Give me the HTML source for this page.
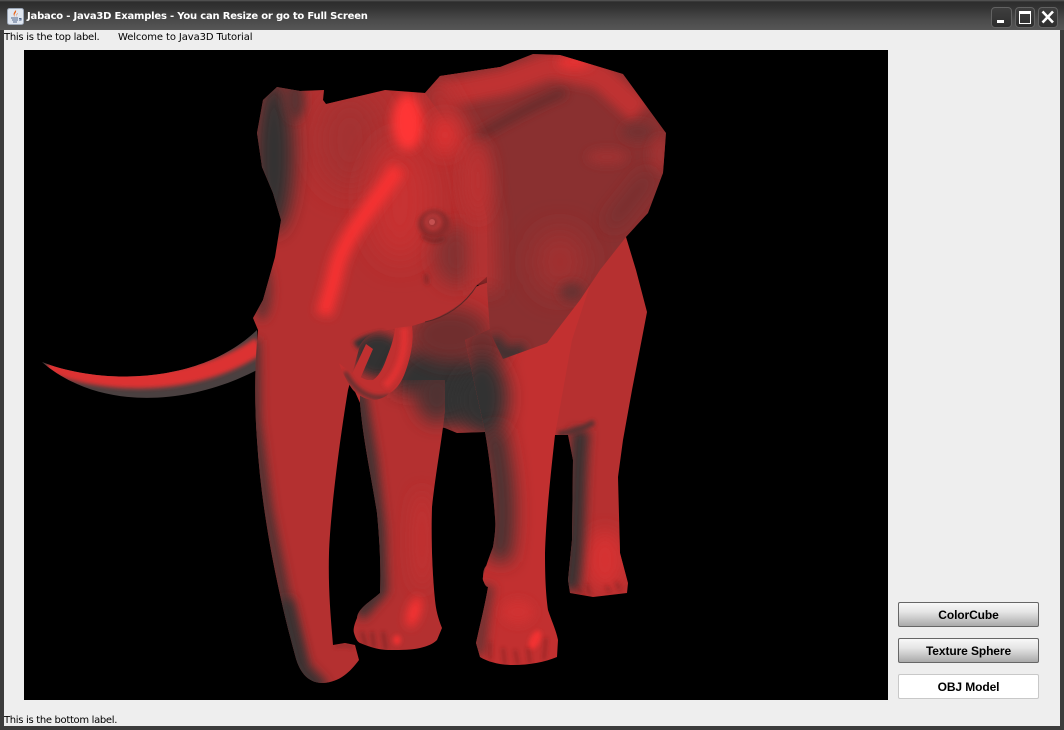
<!DOCTYPE html>
<html><head><meta charset="utf-8"><style>
html,body{margin:0;padding:0;background:#333}
#w{position:relative;width:1064px;height:730px;overflow:hidden;background:#3c3c3c;font-family:"Liberation Sans",sans-serif}
#tb{position:absolute;left:0;top:0;width:1064px;height:30px;background:linear-gradient(#5a5a5a 0,#2c2c2c 2px,#333 8px,#4a4a4a 20px,#565656 30px)}
#c{position:absolute;left:4px;top:30px;width:1056px;height:696px;background:#eeeeee}
.t{position:absolute;font:10px/13px "DejaVu Sans",sans-serif;color:#000;white-space:pre}
.b{position:absolute;left:898px;width:139px;height:23px;border:1px solid #666;border-radius:2px;background:linear-gradient(#f8f8f8,#e4e4e4 40%,#aaa);font:bold 12px/25px "Liberation Sans",sans-serif;text-align:center;color:#000;letter-spacing:-.1px}
.wb{position:absolute;top:7px;height:19px;border:1px solid #626262;border-radius:4px;background:linear-gradient(#3e3e3e,#2e2e2e)}
</style></head><body><div id="w">
<div id="tb"></div>
<div id="c"></div>
<svg style="position:absolute;left:7px;top:8px" width="17" height="17" viewBox="0 0 17 17"><rect x=".5" y=".5" width="16" height="16" rx="2" fill="#dfe6f0" stroke="#9aa5b5"/><path d="M9 2C10 5 6 6 8 9C6 7 6 5 9 2ZM11 5C10 7 9 7 10 9C9 8 9 6 11 5Z" fill="#e8641c"/><path d="M4 10H11M5 12H11M6 14H10" stroke="#50658a"/><path d="M12 10.500H14V12H12" fill="none" stroke="#50658a"/></svg>
<div style="position:absolute;left:27px;top:10px;font:bold 10px/14px 'DejaVu Sans',sans-serif;color:#fff;white-space:pre;letter-spacing:-.2px">Jabaco - Java3D Examples - You can Resize or go to Full Screen</div>
<div class="wb" style="left:991px;width:19px"><div style="position:absolute;left:5px;top:12px;width:7px;height:3px;background:#fff"></div></div>
<div class="wb" style="left:1015px;width:18px"><div style="position:absolute;left:3px;top:3px;width:10px;height:9px;border:1px solid #fff;border-top-width:3px"></div></div>
<div class="wb" style="left:1038px;width:18px"><svg width="18" height="19" style="position:absolute;left:0;top:0"><path d="M3.500 3.500L14 14.500M14 3.500L3.500 14.500" stroke="#fff" stroke-width="2.600"/></svg></div>
<div class="t" style="left:4px;top:31px;letter-spacing:-.27px">This is the top label.</div>
<div class="t" style="left:118px;top:31px;letter-spacing:-.11px">Welcome to Java3D Tutorial</div>
<div class="t" style="left:4px;top:714px;letter-spacing:-.32px">This is the bottom label.</div>
<div class="b" style="top:602px">ColorCube</div>
<div class="b" style="top:638px">Texture Sphere</div>
<div class="b" style="top:674px;background:#fff;border-color:#c8c8c8">OBJ Model</div>

<svg style="position:absolute;left:24px;top:50px" width="864" height="650" viewBox="24 50 864 650">
<defs>
<filter id="b2" filterUnits="userSpaceOnUse" x="0" y="0" width="1064" height="730"><feGaussianBlur stdDeviation="2"/></filter>
<filter id="b5" filterUnits="userSpaceOnUse" x="0" y="0" width="1064" height="730"><feGaussianBlur stdDeviation="5"/></filter>
<filter id="b9" filterUnits="userSpaceOnUse" x="0" y="0" width="1064" height="730"><feGaussianBlur stdDeviation="9"/></filter>
<filter id="b15" filterUnits="userSpaceOnUse" x="0" y="0" width="1064" height="730"><feGaussianBlur stdDeviation="15"/></filter>
<clipPath id="cBody"><path d="M352,340L480,285L626,237L636,270L647,312L643,333L632,390L623,440L618,477L620,553L628,583L627,593L593,597L570,593L568,580L572,540L573,460L568,435L555,435L500,433L485,432L457,433L445,428L400,420L360,403L352,385Z"/></clipPath>
<clipPath id="cLeg1"><path d="M360,403C363,440 372,480 377,513C380,545 381,570 380,593C370,602 358,608 357,618C354,625 353,630 354,633C356,640 358,642 360,643C372,648 380,650 390,650C402,650 412,650 420,648C428,646 433,644 437,640L442,628C438,618 436,610 435,600C432,570 431,535 432,507C436,470 442,440 445,410L445,380L360,380Z"/></clipPath>
<clipPath id="cLeg2"><path d="M465,340L590,285L572,340L555,435C550,480 546,520 545,553C545,580 546,595 548,610C552,622 556,630 558,640L557,657C545,662 530,665 513,665C500,665 488,662 480,657L476,643C480,625 485,605 488,587C484,583 482,580 483,577C486,565 490,555 493,547C495,535 496,525 495,517C493,490 490,460 485,432Z"/></clipPath>
<clipPath id="cHead"><path d="M257,133L263,100L277,87L300,91L324,90L323,100L326,104L385,90L425,93L440,76L500,67L495,150L495,270L477,285C465,303 445,316 425,322L412,326L388,330C375,332 366,335 360,345L348,390C338,450 330,520 329,553C328,590 331,620 333,645L345,643L355,645L359,660C350,672 340,682 323,683C310,683 300,675 295,655C280,600 262,520 257,440C254,400 255,360 258,330L253,318L263,300L275,257L281,220L273,193L262,167Z"/></clipPath>
<clipPath id="cEar"><path d="M440,76L500,67L533,54L560,55L623,74L666,133L663,173L648,213L626,237L600,270L580,300L547,343L503,359L490,332L487,287L487,217L467,150L425,93Z"/></clipPath>
<clipPath id="cAll"><path d="M257,133L263,100L277,87L300,91L324,90L323,100L326,104L385,90L425,93L440,76L500,67L533,54L560,55L623,74L666,133L663,173L648,213L626,237L600,270L580,300L547,343L503,359L490,332L487,287L477,285C465,303 445,316 425,322L360,345L348,390L255,390L255,330L253,318L263,300L275,257L281,220L273,193L262,167Z"/></clipPath>
<clipPath id="cTusk"><path d="M412,326C414,340 411,355 407,367C403,380 398,388 390,393C384,398 378,400 373,400C364,399 358,395 353,390C347,382 342,372 339,363C345,368 350,372 357,375C363,379 368,381 373,380C380,375 384,366 387,357C391,347 394,338 395,328Z"/></clipPath>
<clipPath id="cLT"><path d="M42,362C100,385 200,385 257,330L257,370C190,405 100,412 42,362Z"/></clipPath>
</defs>
<rect x="24" y="50" width="864" height="650" fill="#000"/>

<!-- long tusk -->
<g clip-path="url(#cLT)"><rect x="30" y="320" width="240" height="90" fill="#4a4040"/>
<path d="M48,364C105,386 195,390 260,345" fill="none" stroke="#dc3232" stroke-width="17" filter="url(#b2)"/></g>

<!-- body + back leg -->
<g clip-path="url(#cBody)"><rect x="340" y="230" width="320" height="380" fill="#b63030"/>
<ellipse cx="605" cy="560" rx="20" ry="30" fill="#d63232" filter="url(#b9)"/>
<ellipse cx="378" cy="355" rx="24" ry="22" fill="#333" filter="url(#b5)"/>
<ellipse cx="440" cy="385" rx="50" ry="42" fill="#333" filter="url(#b9)"/>
<ellipse cx="490" cy="400" rx="35" ry="36" fill="#333" filter="url(#b9)"/>
<ellipse cx="450" cy="335" rx="40" ry="28" fill="#702e2e" filter="url(#b9)"/>
<path d="M581,430C576,470 578,540 570,590" fill="none" stroke="#3a3030" stroke-width="18" filter="url(#b5)"/>
<path d="M558,434C572,432 585,428 594,422" fill="none" stroke="#503030" stroke-width="5" filter="url(#b2)"/>
<path d="M577,587L582,594M587,584L590,596M606,586L610,592M616,582L620,590" stroke="#6a2020" stroke-width="2" filter="url(#b2)" opacity=".7"/>
</g>
<ellipse cx="488" cy="576" rx="5" ry="11" fill="#8a3030"/>

<!-- middle leg -->
<g clip-path="url(#cLeg2)"><rect x="460" y="280" width="130" height="390" fill="#c23030"/>
<ellipse cx="482" cy="345" rx="24" ry="26" fill="#702e2e" filter="url(#b9)"/>
<ellipse cx="482" cy="398" rx="26" ry="42" fill="#333" filter="url(#b9)"/>
<path d="M492,430C504,480 505,530 497,560" fill="none" stroke="#3c3030" stroke-width="24" filter="url(#b9)"/>
<path d="M488,585C482,610 480,640 478,655" fill="none" stroke="#703030" stroke-width="14" filter="url(#b5)"/>
<ellipse cx="518" cy="612" rx="16" ry="12" fill="#d03232" filter="url(#b5)"/>
<ellipse cx="535" cy="640" rx="5" ry="10" fill="#f23232" filter="url(#b2)" transform="rotate(25 535 640)"/>
<path d="M490,642L490,660M503,648L505,665M515,650L518,665M528,648L530,664M546,638L544,660" stroke="#6a2020" stroke-width="2.200" filter="url(#b2)" opacity=".65"/>
</g>

<!-- front-left leg -->
<g clip-path="url(#cLeg1)"><rect x="345" y="370" width="110" height="290" fill="#b43030"/>
<rect x="395" y="350" width="60" height="42" fill="#333" filter="url(#b9)"/>
<path d="M358,390L370,460L378,530L380,590L358,615" fill="none" stroke="#403030" stroke-width="15" filter="url(#b5)"/>
<ellipse cx="437" cy="395" rx="22" ry="28" fill="#503030" filter="url(#b9)"/>
<ellipse cx="422" cy="540" rx="9" ry="50" fill="#c43030" filter="url(#b9)"/>
<ellipse cx="414" cy="612" rx="6" ry="16" fill="#ff3232" filter="url(#b5)" transform="rotate(18 414 612)"/>
<ellipse cx="397" cy="640" rx="4" ry="5" fill="#ee3232" filter="url(#b2)"/>
<path d="M362,632L366,646M372,632L374,648M383,632L386,650" stroke="#5a2020" stroke-width="2.200" filter="url(#b2)" opacity=".7"/>
</g>

<!-- head + trunk -->
<g clip-path="url(#cHead)"><rect x="245" y="60" width="260" height="630" fill="#b43030"/>
<ellipse cx="350" cy="140" rx="35" ry="50" fill="#a43030" filter="url(#b15)"/>
<ellipse cx="274" cy="155" rx="20" ry="78" fill="#333" filter="url(#b9)"/>
<ellipse cx="295" cy="100" rx="10" ry="20" fill="#5a3030" filter="url(#b5)"/>
<ellipse cx="262" cy="290" rx="10" ry="30" fill="#6a3030" filter="url(#b5)"/>
<path d="M253,340L254,420L266,510L284,600L300,668" fill="none" stroke="#4a3030" stroke-width="13" filter="url(#b5)"/>
<path d="M284,600L300,668L322,690" fill="none" stroke="#3a3030" stroke-width="18" filter="url(#b5)"/>
<ellipse cx="400" cy="200" rx="30" ry="60" fill="#c83030" filter="url(#b15)"/>
<path d="M398,168C375,205 342,235 335,275C330,295 326,305 324,315" fill="none" stroke="#f83232" stroke-width="16" filter="url(#b5)"/>
<ellipse cx="408" cy="122" rx="16" ry="28" fill="#ff3434" filter="url(#b5)"/>
<ellipse cx="456" cy="255" rx="22" ry="30" fill="#843030" filter="url(#b9)"/>
<path d="M356,346C364,340 372,338 384,336" fill="none" stroke="#333" stroke-width="9" filter="url(#b2)"/>
<!-- eye -->
<ellipse cx="434" cy="224" rx="16" ry="14" fill="#8a2c2c" filter="url(#b2)"/>
<ellipse cx="433" cy="222" rx="9" ry="9" fill="#b83838" filter="url(#b2)"/>
<circle cx="433" cy="222" r="5" fill="#8e3030" filter="url(#b2)" opacity=".8"/>
<circle cx="432" cy="222" r="3" fill="#c45050"/>
<path d="M422,236Q433,245 444,238" fill="none" stroke="#5a2222" stroke-width="2" filter="url(#b2)"/>
<path d="M426,274L427,284" stroke="#7a2626" stroke-width="3" filter="url(#b2)"/>
<path d="M335,646L345,645L353,647" fill="none" stroke="#8a2a2a" stroke-width="3" filter="url(#b2)"/>
</g>
<path d="M425,322C445,318 465,305 477,285" fill="none" stroke="#5a2626" stroke-width="1"/>

<!-- ear -->
<g clip-path="url(#cEar)"><rect x="420" y="50" width="250" height="315" fill="#8a3030"/>
<path d="M440,95L505,82L550,66L600,76L640,112" fill="none" stroke="#c03030" stroke-width="26" filter="url(#b5)"/>
<ellipse cx="575" cy="62" rx="18" ry="7" fill="#ea3232" filter="url(#b5)"/>
<path d="M470,140C505,122 525,108 565,92" fill="none" stroke="#5a2c2c" stroke-width="7" filter="url(#b5)"/>
<ellipse cx="560" cy="262" rx="24" ry="30" fill="#a43030" filter="url(#b15)"/>
<ellipse cx="607" cy="157" rx="20" ry="7" fill="#a03030" filter="url(#b5)"/>
<ellipse cx="638" cy="132" rx="16" ry="9" fill="#743030" filter="url(#b5)"/>
<ellipse cx="660" cy="155" rx="10" ry="18" fill="#a03030" filter="url(#b5)"/>
<path d="M610,225L650,175" stroke="#6a3030" stroke-width="10" filter="url(#b9)"/>
<path d="M492,338L505,356L525,350" fill="none" stroke="#3d3030" stroke-width="14" filter="url(#b5)"/>
<ellipse cx="572" cy="292" rx="12" ry="9" fill="#663030" filter="url(#b5)"/>
</g>
<!-- blend head into ear -->
<g clip-path="url(#cAll)">
<path d="M432,85L468,150L482,220L484,290" fill="none" stroke="#b43030" stroke-width="26" filter="url(#b9)"/>
<ellipse cx="445" cy="135" rx="14" ry="20" fill="#de3232" filter="url(#b9)"/>
<ellipse cx="478" cy="180" rx="12" ry="38" fill="#bc3030" filter="url(#b9)"/>
</g>

<!-- small tusk -->
<path d="M352,374L366,344L373,349L360,379Z" fill="#c03030"/>
<g clip-path="url(#cTusk)"><rect x="335" y="320" width="85" height="85" fill="#c03030"/>
<path d="M404,328C406,350 400,372 385,386" fill="none" stroke="#e03232" stroke-width="7" filter="url(#b2)"/>
<path d="M345,372C355,392 372,402 390,396" fill="none" stroke="#503030" stroke-width="4" filter="url(#b2)"/>
</g>
</svg>
</div></body></html>
